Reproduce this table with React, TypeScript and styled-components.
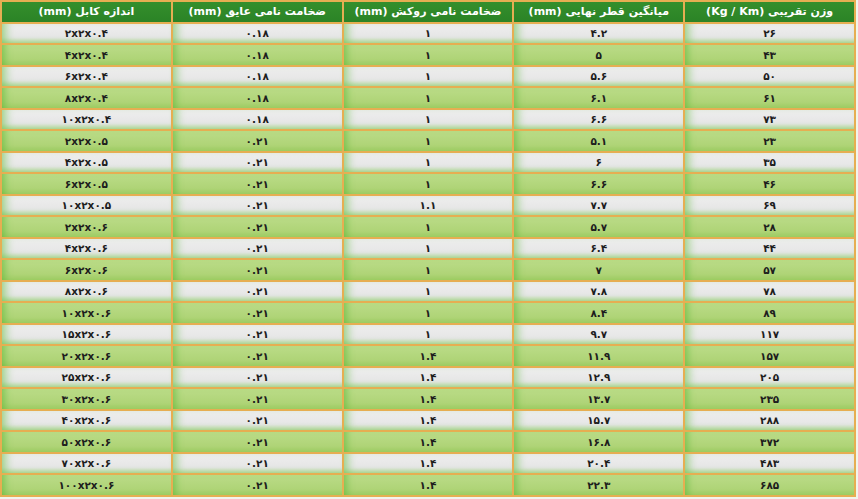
import React from 'react'
import styled, { createGlobalStyle } from 'styled-components'

const GlobalStyle = createGlobalStyle`
  html, body {
    margin: 0;
    padding: 0;
    background: #f1f5ec;
  }
  body {
    font-family: "DejaVu Sans", "Noto Sans", sans-serif;
  }
`

const fa = (s: string) => s.replace(/[0-9]/g, d => '۰۱۲۳۴۵۶۷۸۹'[Number(d)])

const headers = [
  'وزن تقریبی (Kg / Km)',
  'میانگین قطر نهایی (mm)',
  'ضخامت نامی روکش (mm)',
  'ضخامت نامی عایق (mm)',
  'اندازه کابل (mm)',
]

const weights = ['26', '43', '50', '61', '73', '23', '35', '46', '69', '28', '44', '57', '78', '89', '117', '157', '205', '235', '288', '372', '483', '685']
const diameters = ['4.2', '5', '5.6', '6.1', '6.6', '5.1', '6', '6.6', '7.7', '5.7', '6.4', '7', '7.8', '8.4', '9.7', '11.9', '12.9', '13.7', '15.7', '16.8', '20.4', '22.3']
const sheaths = ['1', '1', '1', '1', '1', '1', '1', '1', '1.1', '1', '1', '1', '1', '1', '1', '1.4', '1.4', '1.4', '1.4', '1.4', '1.4', '1.4']
const sizes = [
  '2x2x0.4', '4x2x0.4', '6x2x0.4', '8x2x0.4', '10x2x0.4',
  '2x2x0.5', '4x2x0.5', '6x2x0.5', '10x2x0.5',
  '2x2x0.6', '4x2x0.6', '6x2x0.6', '8x2x0.6', '10x2x0.6', '15x2x0.6', '20x2x0.6',
  '25x2x0.6', '30x2x0.6', '40x2x0.6', '50x2x0.6', '70x2x0.6', '100x2x0.6',
]

const rows = weights.map((w, i) => [
  w,
  diameters[i],
  sheaths[i],
  i < 5 ? '0.18' : '0.21',
  sizes[i],
])

const Table = styled.table`
  width: 856px;
  border-collapse: separate;
  border-spacing: 2px;
  background: #e6ae52;
  table-layout: fixed;
`

const HeadCell = styled.th`
  height: 19.5px;
  padding: 0;
  background: linear-gradient(180deg, #348f2c 0%, #2b8326 100%);
  color: #ffffff;
  font-size: 11px;
  font-weight: bold;
  text-align: center;
  white-space: nowrap;
`

const Cell = styled.td<{ $green: boolean }>`
  height: 19.5px;
  padding: 0;
  font-size: 10.5px;
  font-weight: bold;
  color: #1d1d1d;
  text-align: center;
  background: ${p =>
    p.$green
      ? 'linear-gradient(180deg, #bbdc88 0%, #afd477 70%, #9fcd64 100%)'
      : 'linear-gradient(180deg, #eeeeee 0%, #e6e6e6 70%, #cfe3bd 100%)'};
  box-shadow: ${p =>
    p.$green
      ? 'inset 8px 0 7px -5px rgba(80, 180, 50, 0.55)'
      : 'inset 9px 0 8px -5px rgba(110, 195, 80, 0.6), inset 0 -5px 5px -3px rgba(120, 195, 90, 0.45)'};
`

const Value = styled.span`
  direction: ltr;
  unicode-bidi: isolate;
`

export default function App() {
  return (
    <>
      <GlobalStyle />
      <Table dir="rtl">
        <thead>
          <tr>
            {headers.map(h => (
              <HeadCell key={h}>{h}</HeadCell>
            ))}
          </tr>
        </thead>
        <tbody>
          {rows.map((r, i) => (
            <tr key={i}>
              {r.map((v, j) => (
                <Cell key={j} $green={i % 2 === 1}>
                  <Value dir="ltr">{fa(v)}</Value>
                </Cell>
              ))}
            </tr>
          ))}
        </tbody>
      </Table>
    </>
  )
}
